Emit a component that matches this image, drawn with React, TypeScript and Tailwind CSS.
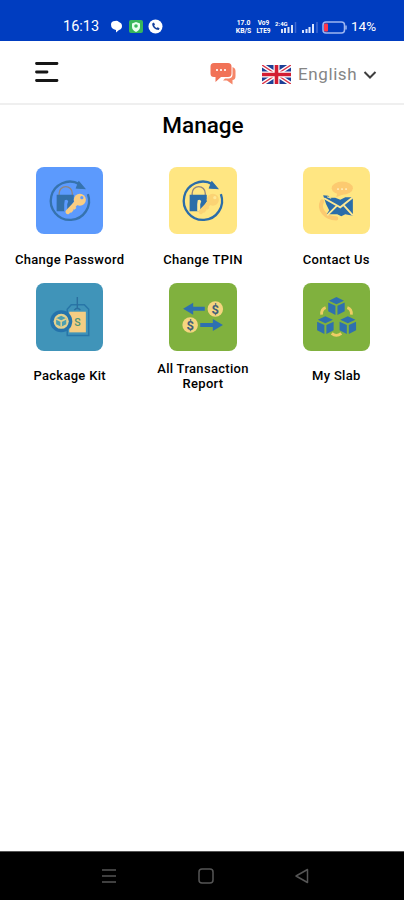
import type { ReactNode } from 'react'

const NAVY = '#2b6da9'
const TAN = '#f9cd82'

function StatusBar() {
  return (
    <div className="h-[40.5px] shrink-0 bg-[#003dc0] text-white">
      <div className="flex h-full items-end pb-[5px] pl-[63px] pr-[26px]">
        <span className="w-[37px] whitespace-nowrap text-[14.5px] leading-[18px]">16:13</span>
        <svg className="mb-[2px] ml-[10px]" width="53" height="15" viewBox="0 0 53 15">
          <path d="M1 5.5Q1 2 5 2Q7 1 9 3Q12 4 12 7Q12 10 9 11L6 13.5V11Q1 10 1 5.5Z" fill="#fff" />
          <rect x="19" y="1" width="14" height="13" rx="2" fill="#38b75b" />
          <path d="M26 3L30 4.5V8Q30 11 26 13Q22 11 22 8V4.5Z" fill="#e8fff0" />
          <circle cx="26" cy="7" r="1.8" fill="#38b75b" />
          <circle cx="45.5" cy="7.5" r="7" fill="#fff" />
          <path d="M42.2 4.5C42 8 45 11 48.8 11L49.6 9.3L47.6 8.2L46.6 9C45.3 8.5 44.5 7.5 44.2 6.6L45 5.5L43.9 3.6Z" fill="#123f9c" />
        </svg>
        <div className="ml-auto flex items-end pb-[2px]">
          <div className="-mb-px flex w-[17px] flex-col items-center text-[6.8px] font-bold leading-[8px]">
            <span>17.0</span>
            <span>KB/S</span>
          </div>
          <div className="-mb-px ml-[4px] flex w-[15px] flex-col items-center text-[6.5px] font-bold leading-[8px]">
            <span>Vo9</span>
            <span>LTE9</span>
          </div>
          <svg className="ml-[4px]" width="22" height="14" viewBox="0 0 22 14">
            <text x="0" y="6" fill="#fff" fontSize="6" fontWeight="700">2:4G</text>
            <path d="M7 9v4M10 8v5M13.5 7v6M17 5v8" stroke="#fff" strokeWidth="2" opacity=".85" />
            <path d="M20.5 2v11" stroke="#3f69d0" strokeWidth="1.5" />
          </svg>
          <svg className="ml-[4px]" width="18" height="14" viewBox="0 0 18 14">
            <path d="M2 10v3M5.5 9v4M8.5 7v6M12 4v9" stroke="#dbe5ff" strokeWidth="2" />
            <path d="M16 2v11" stroke="#3f69d0" strokeWidth="1.5" />
          </svg>
          <svg className="ml-[3px]" width="25" height="13" viewBox="0 0 25 13">
            <rect x="1" y="1" width="21.5" height="11" rx="3" fill="none" stroke="#9eb6ef" strokeWidth="1.5" />
            <rect x="2" y="2.5" width="4" height="8" rx="1" fill="#ff3648" />
            <path d="M24 4.5v4" stroke="#9eb6ef" strokeWidth="1.5" />
          </svg>
          <span className="-mb-[1px] ml-[4px] w-[27px] whitespace-nowrap text-[13.5px] leading-[17px]">14%</span>
        </div>
      </div>
    </div>
  )
}

function UkFlag() {
  return (
    <svg width="29" height="19" viewBox="0 0 29 19">
      <rect width="29" height="19" fill="#1d3f96" />
      <path d="M0 0L29 19M29 0L0 19" stroke="#fff" strokeWidth="4.2" />
      <path d="M0 0L29 19M29 0L0 19" stroke="#dc3347" strokeWidth="1.4" />
      <path d="M14.5 0V19M0 9.5H29" stroke="#fff" strokeWidth="6" />
      <path d="M14.5 0V19M0 9.5H29" stroke="#d31c32" strokeWidth="3.6" />
    </svg>
  )
}

function Header() {
  return (
    <header className="flex h-[64px] shrink-0 items-center border-b-2 border-[#efefef] pl-[34px] pr-[27px]">
      <svg width="26" height="24" viewBox="0 0 26 24" stroke="#161616" strokeWidth="2.8" strokeLinecap="round">
        <path d="M2.5 3.5H23M2.5 12H13M2.5 20.5H23" />
      </svg>
      <svg className="ml-auto mt-[4px]" width="26" height="24" viewBox="0 0 26 24">
        <path d="M22.5 5Q25.5 6 25.5 9V14Q25.5 18 22.5 18V22.5L17 18.5H13L15 16.5H19Q22.5 16 22.5 12.5Z" fill="#f58669" />
        <path d="M4 1H18Q21.5 1 21.5 4.5V11.5Q21.5 15 18 15H11L5.5 20V15H4Q.5 15 .5 11.5V4.5Q.5 1 4 1Z" fill="#f17257" />
        <path d="M6 8h2M10 8h2M14 8h2" stroke="#ffe3dc" strokeWidth="2" />
      </svg>
      <div className="ml-[26px] mt-[5px] flex items-center">
        <UkFlag />
        <span className="ml-[7px] w-[61px] whitespace-nowrap text-[17px] leading-5 tracking-[0.6px] text-[#858585]">English</span>
        <svg className="ml-[4px] mt-[2px]" width="14" height="10" viewBox="0 0 14 10" fill="none" stroke="#3e3e3e" strokeWidth="2">
          <path d="M1.5 2L7 7.5L12.5 2" />
        </svg>
      </div>
    </header>
  )
}

function LockIcon({ ring, body, keyFill, hole }: { ring: string; body: string; keyFill: string; hole: string }) {
  return (
    <>
      <path d="M51.5 27A19 19 0 1 1 43 17" fill="none" stroke={ring} strokeWidth="2.3" />
      <path d="M42.5 14.5L48.5 21.5L40 21Z" fill={ring} stroke={ring} />
      <path d="M23 28V26A6.5 6.5 0 0 1 36 26V28" fill="none" stroke="#8d8580" strokeWidth="1.3" />
      <path d="M20.5 27.5H37.5V34L32 44H20.5Z" fill={body} />
      <path d="M28.5 33Q31 31.5 32 34L31 37V44H28V37Z" fill={hole} />
      <path d="M31.5 44.5L41 34.5" stroke={keyFill} strokeWidth="4.5" strokeLinecap="round" />
      <path d="M34 45L36.5 42.5M37 42L39.5 40" stroke={keyFill} strokeWidth="2" />
      <circle cx="43.5" cy="32.5" r="6" fill={keyFill} />
      <circle cx="45.5" cy="30.5" r="1.6" fill={hole} />
    </>
  )
}

function ContactIcon() {
  return (
    <>
      <path d="M19 34C15 42 22 51 33 51" fill="none" stroke="#fcca70" strokeWidth="4" strokeLinecap="round" />
      <ellipse cx="39" cy="21" rx="10.5" ry="6.5" fill="#fcca70" />
      <path d="M34 26L33 30L40 27Z" fill="#fcca70" />
      <path d="M34 22h1.5M38 22h1.5M42 22h1.5" stroke="#fff0c0" strokeWidth="1.6" />
      <path d="M20 28L25 28.5L27 30.5H32L37 32.5L42 30H49.5V48.5L42 47L38 49L34 47H23.5L26 43L23 37Z" fill={NAVY} />
      <path d="M21 31L37 40L49.5 30M24 48L33.5 38.5M49.5 48L40.5 38" fill="none" stroke="#ffe995" strokeWidth="1.8" />
      <path d="M24 29.5L28 31" stroke="#ffe995" strokeWidth="1.2" />
    </>
  )
}

function PackageIcon() {
  return (
    <>
      <path d="M31 52V26L35 21.5H48L52.3 26V52Z" fill="none" stroke="#2876a8" strokeWidth="1.5" />
      <path d="M33 28.5H49.5V49H33Z" fill="#f4cd83" />
      <path d="M41 14V26M38 27Q41 23 44 27" fill="none" stroke="#2b6f9f" strokeWidth="1.4" />
      <text x="38" y="43" fill="#4f9376" fontSize="10.5" fontWeight="500">S</text>
      <circle cx="25" cy="38" r="11" fill="#2473ac" />
      <circle cx="25" cy="38" r="7.5" fill="#e3d18f" />
      <path d="M25 32.5L30 35V41L25 43.5L20 41V35Z" fill="#4b9fb0" />
      <path d="M20 35.5L25 38L30 35.5M25 38V43.5" fill="none" stroke="#e3d18f" strokeWidth="1.5" />
    </>
  )
}

function TransactionIcon() {
  return (
    <>
      <path d="M14 25.5L24 19.5V23.5H35.5V27.5H24V31.5Z" fill="#2e70b0" />
      <path d="M53.5 41.7L43.5 35.7V39.7H31V43.7H43.5V47.7Z" fill="#2e70b0" />
      <circle cx="46" cy="25.7" r="7.7" fill="#f5d57f" />
      <circle cx="21" cy="41.7" r="7.7" fill="#f5d57f" />
      <g fill="#405f79" fontSize="13" fontWeight="700" textAnchor="middle">
        <text x="46" y="30.3">$</text>
        <text x="21" y="46.3">$</text>
      </g>
    </>
  )
}

function Cube({ x, y }: { x: number; y: number }) {
  return (
    <g transform={`translate(${x} ${y})`} fill="#2f70af">
      <path d="M0 -9L7.5 -5.5L0 -2L-7.5 -5.5Z" />
      <path d="M-8.2 -3.6L-1 -0.3V8.7L-8.2 5Z" />
      <path d="M8.2 -3.6L1 -0.3V8.7L8.2 5Z" />
    </g>
  )
}

function SlabIcon() {
  return (
    <>
      <path d="M18.5 31.5Q18 26 22.5 24.5M44 24.5Q48.5 26 48 31.5M28.5 50Q33 54 38 50" fill="none" stroke="#efcd65" strokeWidth="2.8" />
      <Cube x={33.2} y={23} />
      <Cube x={22.2} y={42} />
      <Cube x={44.5} y={42} />
    </>
  )
}

interface MenuItem {
  label: string
  bg: string
  icon: ReactNode
}

const ITEMS: MenuItem[] = [
  { label: 'Change Password', bg: 'bg-[#5c9afd]', icon: <LockIcon ring="#3673ae" body="#3370aa" keyFill={TAN} hole="#5c9afd" /> },
  { label: 'Change TPIN', bg: 'bg-[#ffe682]', icon: <LockIcon ring={NAVY} body={NAVY} keyFill="#fbd374" hole="#ffe997" /> },
  { label: 'Contact Us', bg: 'bg-[#ffe682]', icon: <ContactIcon /> },
  { label: 'Package Kit', bg: 'bg-[#4094b9]', icon: <PackageIcon /> },
  { label: 'All Transaction Report', bg: 'bg-[#80b13e]', icon: <TransactionIcon /> },
  { label: 'My Slab', bg: 'bg-[#80b13e]', icon: <SlabIcon /> },
]

function NavBar() {
  return (
    <nav className="flex h-[49px] shrink-0 items-center justify-between border-t border-[#555] bg-black pl-[101px] pr-[94px]">
      <svg width="16" height="16" viewBox="0 0 16 16" stroke="#555" strokeWidth="1.6"><path d="M1 2H15M1 8H15M1 14H15" /></svg>
      <svg width="16" height="16" viewBox="0 0 16 16" fill="none" stroke="#555" strokeWidth="1.5"><rect x="1" y="1" width="14" height="14" rx="3" /></svg>
      <svg width="16" height="16" viewBox="0 0 16 16" fill="none" stroke="#555" strokeWidth="1.5"><path d="M13.5 1.5V14.5L2 8Z" strokeLinejoin="round" /></svg>
    </nav>
  )
}

export default function App() {
  return (
    <div className="flex h-[900px] w-[404px] flex-col overflow-hidden bg-white font-['Roboto',sans-serif]">
      <StatusBar />
      <Header />
      <main className="flex-1 pl-[3px] pr-[1px]">
        <h1 className="mt-[6px] text-center text-[22.5px] font-medium leading-[28px] text-black">Manage</h1>
        <div className="mt-[28px] grid grid-cols-3">
          {ITEMS.map((item) => (
            <div key={item.label} className="flex h-[116.5px] flex-col items-center">
              <div className={`size-[67.5px] shrink-0 rounded-lg ${item.bg}`}>
                <svg className="size-full" viewBox="0 0 67 67">{item.icon}</svg>
              </div>
              <div className="mt-[7px] flex h-[37px] w-[118px] items-center justify-center text-center text-[13px] font-medium leading-[15.5px] tracking-[0.3px] text-black">
                {item.label}
              </div>
            </div>
          ))}
        </div>
      </main>
      <NavBar />
    </div>
  )
}
